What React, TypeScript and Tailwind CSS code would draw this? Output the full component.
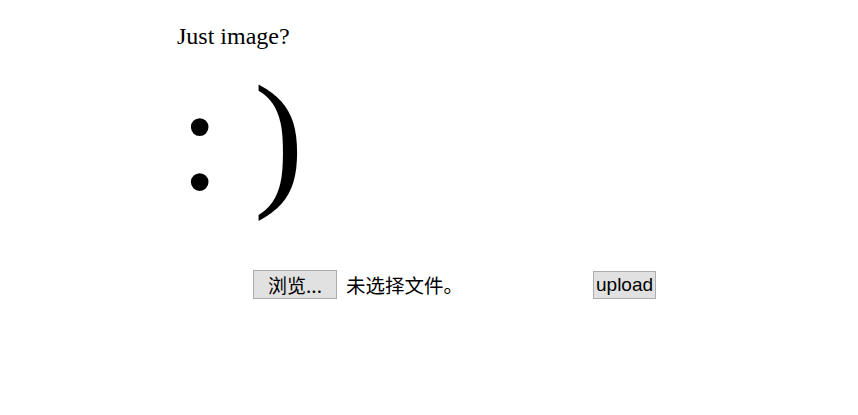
export default function App() {
  return (
    <div className="w-[858px] h-[415px] bg-white relative">
      <div className="pl-[177px] pt-[22px]">
        <div className="text-[24px] leading-[28px] text-black" style={{ fontFamily: '"Liberation Serif", serif' }}>
          Just image?
        </div>
        <div className="mt-[13px] flex items-start h-[150px] text-black" style={{ fontFamily: '"Liberation Serif", serif' }}>
          <span className="text-[150px] leading-[150px] ml-[2px]">:</span>
          <span className="text-[150px] leading-[150px] ml-[33px]">)</span>
        </div>
      </div>
      <div className="flex items-center mt-[57px] pl-[253px]" style={{ fontFamily: '"Noto Sans CJK SC", "Noto Sans", sans-serif' }}>
        <button className="w-[84px] h-[29px] bg-[#e1e1e1] border border-[#adadad] text-[19px] leading-none text-black flex items-center justify-center">
          浏览...
        </button>
        <span className="ml-[9px] text-[19.5px] text-black">未选择文件。</span>
        <button className="ml-[130px] h-[28px] px-[2px] bg-[#e1e1e1] border border-[#adadad] text-[19px] leading-none text-black" style={{ fontFamily: '"Liberation Sans", Arial, sans-serif' }}>
          upload
        </button>
      </div>
    </div>
  );
}
